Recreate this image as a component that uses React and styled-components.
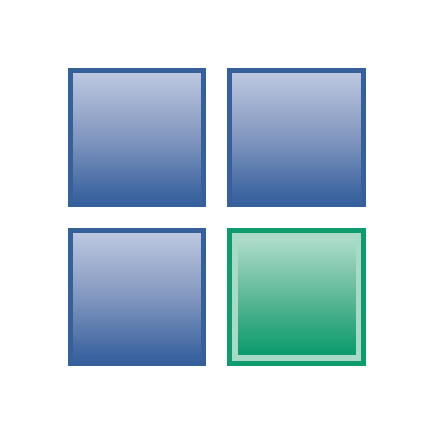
import React from "react";
import styled, { createGlobalStyle } from "styled-components";

const Global = createGlobalStyle`
  html, body { margin: 0; padding: 0; background: #fff; }
`;

const Page = styled.div`
  width: 434px;
  height: 434px;
  box-sizing: border-box;
  background: #fff;
  display: grid;
  grid-template-columns: 138px 139px;
  grid-template-rows: 139px 138px;
  column-gap: 21px;
  row-gap: 21px;
  padding: 68px 0 0 68px;
`;

const BlueTile = styled.div`
  box-sizing: border-box;
  border: 5px solid #36609c;
  background: linear-gradient(180deg, #bdc8e0 0%, #8297bf 50%, #3a639f 97%);
`;

const GreenTile = styled.div`
  box-sizing: border-box;
  border: 5px solid #0e9c6e;
  background: #fff;
`;

const GreenInset = styled.div`
  box-sizing: border-box;
  height: 100%;
  border-style: solid;
  border-width: 5px 5px 6px 6px;
  border-color: #a9dac8;
  background: linear-gradient(180deg, #aeddcb 0%, #5fb897 50%, #0e9c6e 97%);
`;

export default function App() {
  return (
    <>
      <Global />
      <Page>
        <BlueTile />
        <BlueTile />
        <BlueTile />
        <GreenTile>
          <GreenInset />
        </GreenTile>
      </Page>
    </>
  );
}
